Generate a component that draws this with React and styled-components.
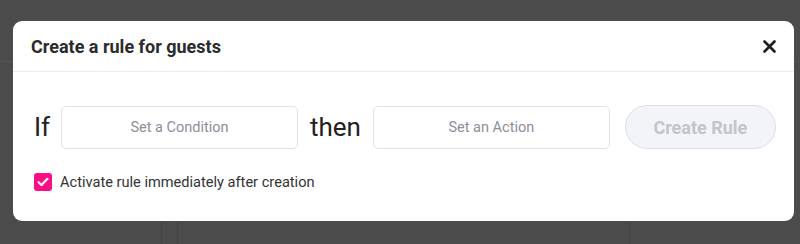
import React, { useState } from "react";
import styled, { createGlobalStyle } from "styled-components";

const GlobalStyle = createGlobalStyle`
  html, body {
    margin: 0;
    padding: 0;
    background: #4b4b4b;
    font-family: Roboto, "Liberation Sans", Arial, sans-serif;
  }
  * { box-sizing: border-box; }
`;

// dimmed page behind the dialog
const Page = styled.div`
  position: relative;
  width: 800px;
  height: 244px;
  overflow: hidden;
  background: #4b4b4b;
`;

const PageHeader = styled.div`
  height: 62px;
  border-bottom: 1px solid #565656;
`;

const PageBody = styled.div`
  display: flex;
  height: 182px;
`;

const Sidebar = styled.div`
  width: 162px;
  border-right: 1px solid #444;
`;

const Panel = styled.div`
  margin-left: 15px;
  width: 453px;
  border-left: 1px solid #444;
  border-right: 1px solid #444;
`;

const Overlay = styled.div`
  position: absolute;
  top: 21px;
  left: 13px;
`;

const Modal = styled.div`
  width: 781px;
  height: 200px;
  background: #fff;
  border-radius: 9px;
  overflow: hidden;
`;

const Header = styled.div`
  display: flex;
  align-items: center;
  justify-content: space-between;
  height: 51px;
  padding: 0 18px;
  border-bottom: 1px solid #ececec;
`;

const Title = styled.h2`
  margin: 0;
  font-size: 18px;
  font-weight: 700;
  color: #2b2b2b;
`;

const Close = styled.button`
  display: flex;
  align-items: center;
  justify-content: center;
  width: 14px;
  height: 14px;
  padding: 0;
  border: none;
  background: none;
  cursor: pointer;
`;

const Body = styled.div`
  padding: 33px 18px 0 21px;
`;

const Row = styled.div`
  display: flex;
  align-items: center;
`;

const Word = styled.span`
  font-size: 26px;
  color: #222;
  margin-right: ${(p) => p.$gap}px;
  line-height: 1;
`;

const Field = styled.button`
  width: 238px;
  height: 43px;
  margin-right: ${(p) => p.$gap}px;
  border: 1px solid #e3e3e6;
  border-radius: 5px;
  background: #fff;
  font-family: inherit;
  font-size: 14.5px;
  color: #8a8f99;
  cursor: pointer;
`;

const CreateButton = styled.button`
  width: 152px;
  height: 44px;
  border: 1px solid #dcdfee;
  border-radius: 22px;
  background: #f3f4f8;
  font-family: inherit;
  font-size: 18px;
  font-weight: 700;
  color: #c3c4cb;
  cursor: not-allowed;
`;

const CheckRow = styled.label`
  display: flex;
  align-items: center;
  gap: 8px;
  margin-top: 24px;
  font-size: 14.6px;
  color: #333;
  cursor: pointer;
`;

const Box = styled.span`
  display: flex;
  align-items: center;
  justify-content: center;
  width: 18px;
  height: 18px;
  border-radius: 3px;
  background: ${(p) => (p.$on ? "#fc0d85" : "#fff")};
  border: ${(p) => (p.$on ? "none" : "1px solid #ccc")};
`;

export default function App() {
  const [active, setActive] = useState(true);

  return (
    <>
      <GlobalStyle />
      <Page>
        <PageHeader />
        <PageBody>
          <Sidebar />
          <Panel />
        </PageBody>

        <Overlay>
          <Modal>
            <Header>
              <Title>Create a rule for guests</Title>
              <Close aria-label="Close">
                <svg width="13" height="13" viewBox="0 0 13 13">
                  <path d="M1.5 1.5 L11.5 11.5 M11.5 1.5 L1.5 11.5" stroke="#1e1e1e" strokeWidth="2.6" strokeLinecap="round" />
                </svg>
              </Close>
            </Header>
            <Body>
              <Row>
                <Word $gap={11}>If</Word>
                <Field $gap={12}>Set a Condition</Field>
                <Word $gap={12}>then</Word>
                <Field $gap={15}>Set an Action</Field>
                <CreateButton disabled>Create Rule</CreateButton>
              </Row>
              <CheckRow onClick={() => setActive(!active)}>
                <Box $on={active}>
                  {active && (
                    <svg width="12" height="10" viewBox="0 0 12 10">
                      <path d="M1.5 5.2 L4.5 8 L10.5 1.8" stroke="#fff" strokeWidth="2.2" fill="none" strokeLinecap="round" strokeLinejoin="round" />
                    </svg>
                  )}
                </Box>
                Activate rule immediately after creation
              </CheckRow>
            </Body>
          </Modal>
        </Overlay>
      </Page>
    </>
  );
}
